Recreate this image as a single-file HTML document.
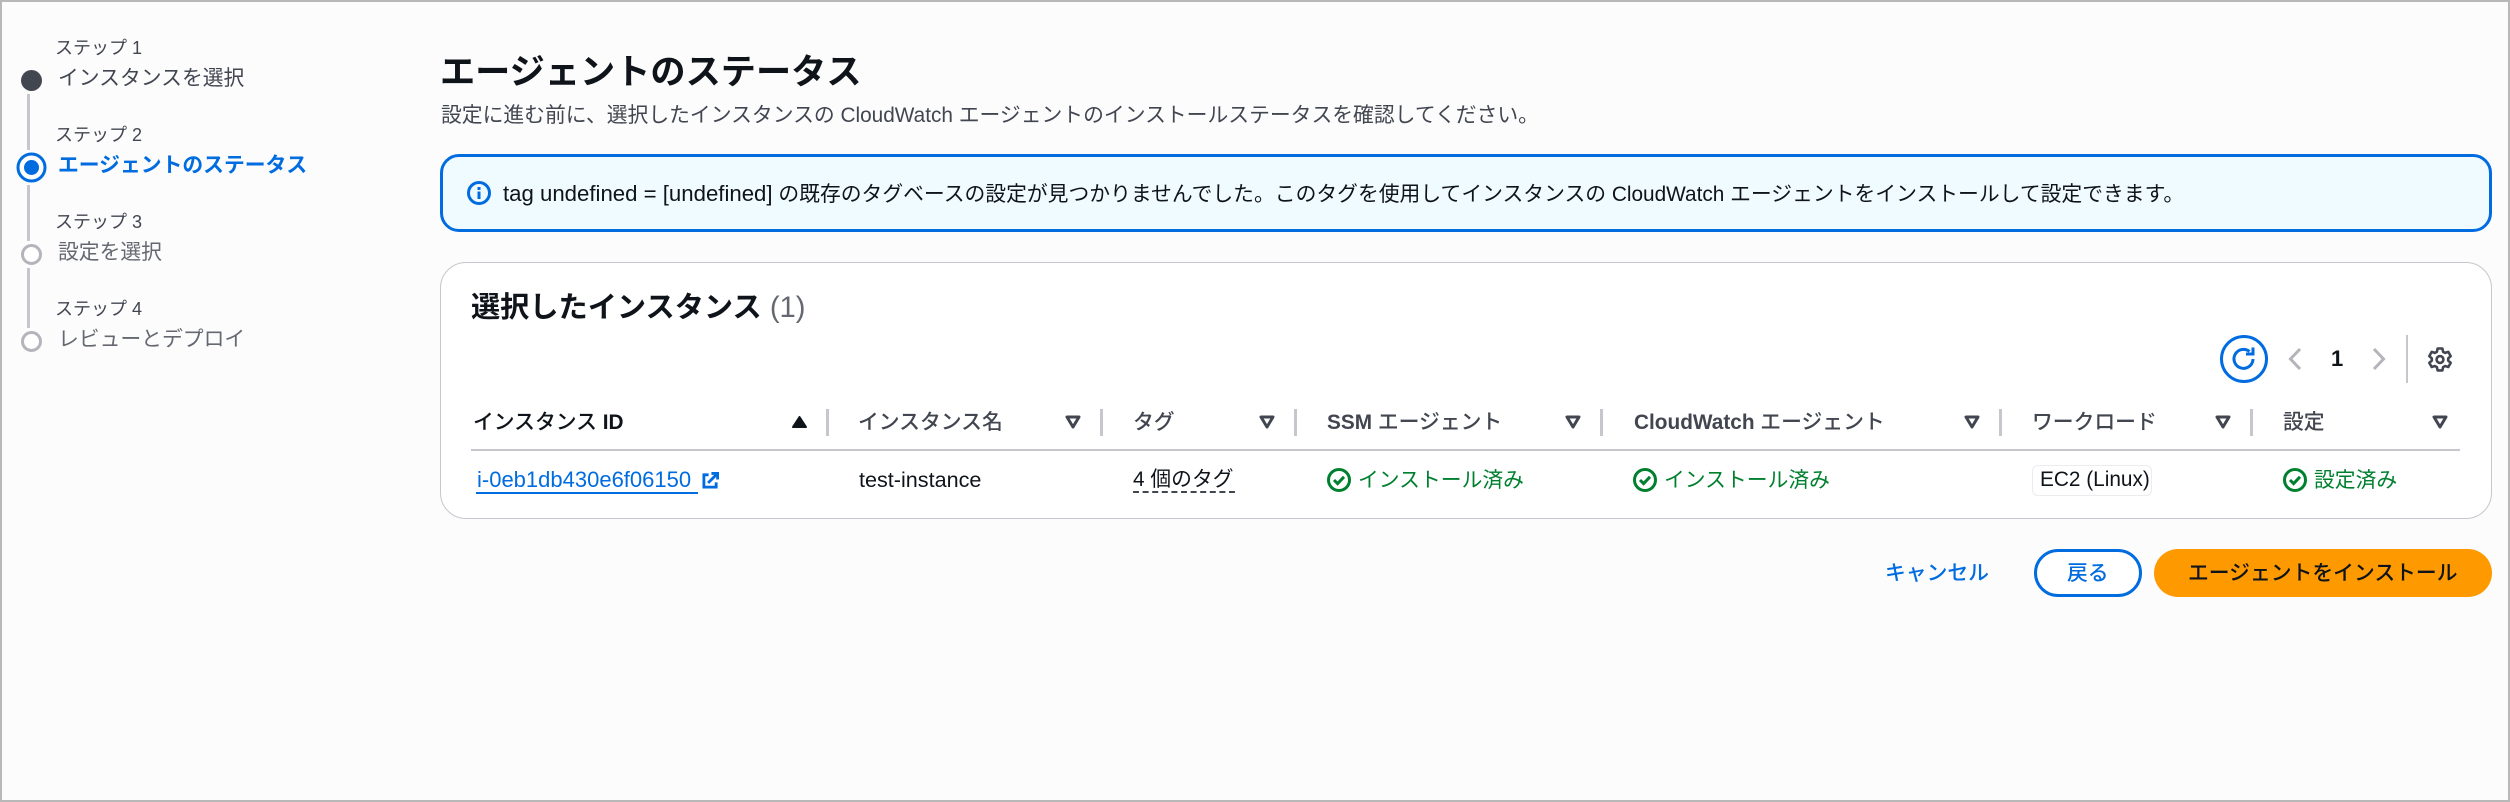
<!DOCTYPE html>
<html lang="ja"><head><meta charset="utf-8"><style>
html,body{margin:0;padding:0}
body{width:2510px;height:802px;position:relative;overflow:hidden;background:#fcfcfd;font-family:"Liberation Sans","Noto Sans CJK JP",sans-serif;color:#0f141a}
.t{position:absolute;white-space:nowrap;line-height:30px;height:30px;font-size:20.8px}
.b{position:absolute;box-sizing:border-box}
svg{position:absolute;overflow:visible}
.h{font-weight:500;color:#424650}
.h b{font-weight:700}
.g{color:#00802f}
.sep{position:absolute;width:3px;height:27px;top:409px;background:#c6c6cd}
.lb{color:#424650;font-size:18px}
</style></head><body>
<div class="b" style="left:0;top:0;width:2510px;height:802px;border:2px solid #b8b8b8"></div>

<!-- steps -->
<div class="b" style="left:27px;top:94px;width:3px;height:56px;background:#c6c6cd"></div>
<div class="b" style="left:27px;top:185px;width:3px;height:56px;background:#c6c6cd"></div>
<div class="b" style="left:27px;top:268px;width:3px;height:60px;background:#c6c6cd"></div>
<svg style="left:0;top:0" width="60" height="360">
<circle cx="31.5" cy="80.5" r="10.5" fill="#424650"/>
<circle cx="31.5" cy="167.5" r="13.5" fill="#fff" stroke="#006ce0" stroke-width="3"/>
<circle cx="31.5" cy="167.5" r="7.5" fill="#006ce0"/>
<circle cx="31.5" cy="254.5" r="9" fill="#fff" stroke="#b4b4bb" stroke-width="3"/>
<circle cx="31.5" cy="341.5" r="9" fill="#fff" stroke="#b4b4bb" stroke-width="3"/>
</svg>
<div class="t lb" style="left:55px;top:33px">ステップ 1</div>
<div class="t" style="left:58px;top:64px;color:#424650">インスタンスを選択</div>
<div class="t lb" style="left:55px;top:120px">ステップ 2</div>
<div class="t" style="left:58px;top:151px;color:#006ce0;font-weight:700">エージェントのステータス</div>
<div class="t lb" style="left:55px;top:207px">ステップ 3</div>
<div class="t" style="left:58px;top:238px;color:#656871">設定を選択</div>
<div class="t lb" style="left:55px;top:294px">ステップ 4</div>
<div class="t" style="left:58px;top:325px;color:#656871">レビューとデプロイ</div>

<!-- heading -->
<div class="t" style="left:440px;top:53px;height:40px;line-height:40px;font-size:35.2px;font-weight:700">エージェントのステータス</div>
<div class="t" style="left:441px;top:101px;color:#424650">設定に進む前に、選択したインスタンスの CloudWatch エージェントのインストールステータスを確認してください。</div>

<!-- alert -->
<div class="b" style="left:440px;top:154px;width:2052px;height:78px;background:#f0fbff;border:3px solid #006ce0;border-radius:19px"></div>
<svg style="left:467px;top:181px" width="24" height="24" viewBox="0 0 24 24"><circle cx="12" cy="12" r="10.5" fill="none" stroke="#006ce0" stroke-width="3"/><path d="M12 10.5V18" stroke="#006ce0" stroke-width="3" fill="none"/><path d="M12 6v3" stroke="#006ce0" stroke-width="3" fill="none"/></svg>
<div class="t" style="left:503px;top:179px"><span style="font-size:22.2px">tag undefined = [undefined]</span> の既存のタグベースの設定が見つかりませんでした。このタグを使用してインスタンスの CloudWatch エージェントをインストールして設定できます。</div>

<!-- card -->
<div class="b" style="left:440px;top:262px;width:2052px;height:257px;background:#fff;border:1.5px solid #c6c6cd;border-radius:26px"></div>
<div class="t" style="left:471px;top:293px;font-size:29.2px;font-weight:700">選択したインスタンス <span style="font-weight:400;color:#656871">(1)</span></div>

<!-- toolbar -->
<svg style="left:2220px;top:335px" width="48" height="48" viewBox="0 0 48 48" fill="none" stroke="#006ce0">
<circle cx="24" cy="24" r="22.5" stroke-width="3"/>
<path d="M33 24a9.5 9.5 0 1 1-3.5-7.5" stroke-width="3"/>
<path d="M33 12.5v6.5h-7" stroke-width="3"/>
</svg>
<svg style="left:2288px;top:347px" width="14" height="24" viewBox="0 0 14 24" fill="none" stroke="#b4b4bb" stroke-width="3"><path d="M12 2 2.5 12 12 22"/></svg>
<div class="t" style="left:2331px;top:344px;font-weight:700;font-size:22px">1</div>
<svg style="left:2372px;top:347px" width="14" height="24" viewBox="0 0 14 24" fill="none" stroke="#b4b4bb" stroke-width="3"><path d="M2 2l9.5 10L2 22"/></svg>
<div class="b" style="left:2406px;top:335px;width:2px;height:48px;background:#c6c6cd"></div>
<svg style="left:2428px;top:347px" width="24" height="24" viewBox="0 0 24 24" fill="none" stroke="#424650" stroke-width="2.6" stroke-linejoin="round">
<path d="M9.6 1.5h4.8l.7 3.3 2 1.1 3.2-1 2.4 4.2-2.5 2.2v2.3l2.5 2.2-2.4 4.2-3.2-1-2 1.1-.7 3.3H9.6l-.7-3.3-2-1.1-3.2 1-2.4-4.2 2.5-2.2v-2.3L1.3 9.1l2.4-4.2 3.2 1 2-1.1z"/>
<circle cx="12" cy="12.5" r="3.4"/>
</svg>

<!-- table head -->
<div class="t h" style="left:473px;top:408px;color:#0f141a">インスタンス <b>ID</b></div>
<div class="t h" style="left:858px;top:408px">インスタンス名</div>
<div class="t h" style="left:1133px;top:408px">タグ</div>
<div class="t h" style="left:1327px;top:408px"><b>SSM</b> エージェント</div>
<div class="t h" style="left:1634px;top:408px"><b>CloudWatch</b> エージェント</div>
<div class="t h" style="left:2032px;top:408px">ワークロード</div>
<div class="t h" style="left:2283px;top:408px">設定</div>
<div class="sep" style="left:826px"></div>
<div class="sep" style="left:1100px"></div>
<div class="sep" style="left:1294px"></div>
<div class="sep" style="left:1600px"></div>
<div class="sep" style="left:1999px"></div>
<div class="sep" style="left:2250px"></div>
<svg style="left:0;top:0" width="2510" height="802">
<path d="M793 427h13l-6.5-10z" fill="#0f141a" stroke="#0f141a" stroke-width="2" stroke-linejoin="round"/>
<g fill="none" stroke="#424650" stroke-width="3" stroke-linejoin="round">
<path d="M1067 417h12l-6 10z"/>
<path d="M1261 417h12l-6 10z"/>
<path d="M1567 417h12l-6 10z"/>
<path d="M1966 417h12l-6 10z"/>
<path d="M2217 417h12l-6 10z"/>
<path d="M2434 417h12l-6 10z"/>
</g>
</svg>
<div class="b" style="left:471px;top:449px;width:1989px;height:1.5px;background:#c6c6cd"></div>

<!-- row -->
<div class="t" style="left:477px;top:465px;color:#006ce0;font-size:22px">i-0eb1db430e6f06150</div>
<div class="b" style="left:476px;top:492px;width:222px;height:2px;background:#006ce0"></div>
<svg style="left:702px;top:472px" width="17" height="17" viewBox="0 0 18 18" fill="none" stroke="#006ce0" stroke-width="3"><path d="M7 3H2v13h13v-5"/><path d="M6.5 11.5 16 2"/><path d="M10 1.5h6.5V8"/></svg>
<div class="t" style="left:859px;top:465px;font-size:21.6px">test-instance</div>
<div class="t" style="left:1133px;top:465px">4 個のタグ</div>
<div class="b" style="left:1133px;top:491px;width:102px;height:0;border-top:2px dashed #424650"></div>

<svg style="left:1327px;top:468px" width="24" height="24" viewBox="0 0 24 24" fill="none" stroke="#00802f" stroke-width="3"><circle cx="12" cy="12" r="10.5"/><path d="M7 12l3.6 3.6L17 8.8"/></svg>
<div class="t g" style="left:1358px;top:466px">インストール済み</div>
<svg style="left:1633px;top:468px" width="24" height="24" viewBox="0 0 24 24" fill="none" stroke="#00802f" stroke-width="3"><circle cx="12" cy="12" r="10.5"/><path d="M7 12l3.6 3.6L17 8.8"/></svg>
<div class="t g" style="left:1664px;top:466px">インストール済み</div>
<div class="b" style="left:2032px;top:465px;width:120px;height:31px;border:1.5px solid #ebebf0;border-radius:6px;background:#fff"></div>
<div class="t" style="left:2040px;top:465px">EC2 (Linux)</div>
<svg style="left:2283px;top:468px" width="24" height="24" viewBox="0 0 24 24" fill="none" stroke="#00802f" stroke-width="3"><circle cx="12" cy="12" r="10.5"/><path d="M7 12l3.6 3.6L17 8.8"/></svg>
<div class="t g" style="left:2314px;top:466px">設定済み</div>

<!-- buttons -->
<div class="t" style="left:1885px;top:559px;color:#006ce0;font-weight:500">キャンセル</div>
<div class="b" style="left:2034px;top:549px;width:108px;height:48px;border:3px solid #006ce0;border-radius:24px;background:#fff"></div>
<div class="t" style="left:2067px;top:559px;color:#006ce0;font-weight:500">戻る</div>
<div class="b" style="left:2154px;top:549px;width:338px;height:48px;border-radius:24px;background:#ff9900"></div>
<div class="t" style="left:2188px;top:559px;font-weight:500">エージェントをインストール</div>
</body></html>
